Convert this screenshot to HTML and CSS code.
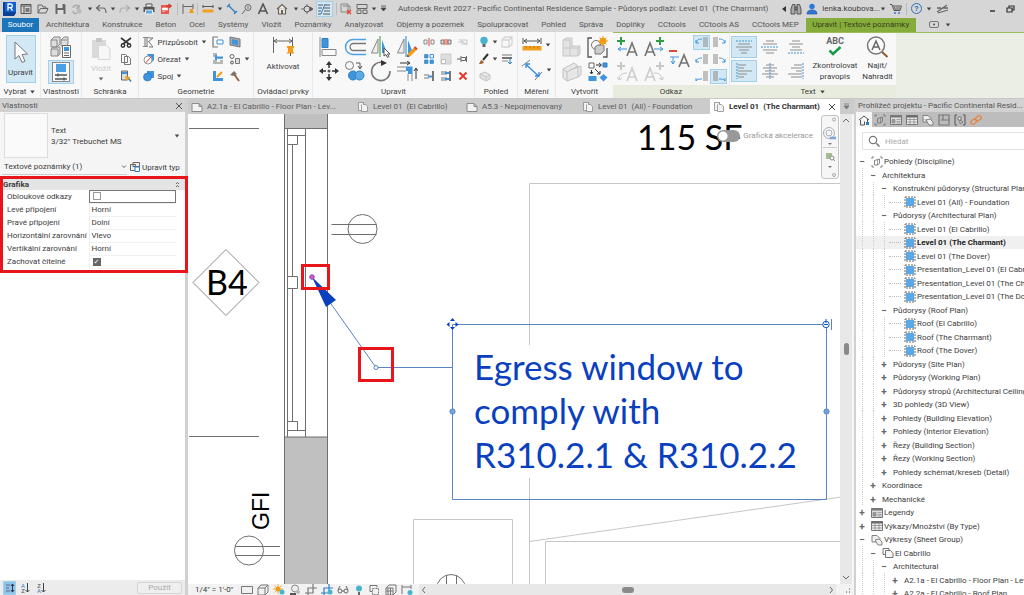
FILE: index.html
```
<!DOCTYPE html>
<html lang="cs">
<head>
<meta charset="utf-8">
<title>Autodesk Revit 2027</title>
<link rel="stylesheet" href="styles.css">
</head>
<body>
<svg class="sprite" aria-hidden="true">
  <symbol id="caret" viewBox="0 0 6 4"><path d="M.8.5h4.4L3 3.4z" fill="#444"/></symbol>
  <symbol id="sheet" viewBox="0 0 12 12"><path d="M1 2.500h7l3 3v5H1zM8 2.500v3h3" fill="#f2f2f2" stroke="#8c8c8c"/></symbol>
  <symbol id="plan" viewBox="0 0 12 12"><path d="M1.500 1.500h5v2h2l2 2v5h-6v-1h-3zM6.500 1.500v2M4.500 3.500v6" fill="#f2f2f2" stroke="#8c8c8c" stroke-width=".8"/></symbol>
  <symbol id="view" viewBox="0 0 12 12"><rect x="1" y="1" width="10" height="10" fill="none" stroke="#666" stroke-dasharray="2 1"/><path d="M2 2h8v8H2z" fill="#5aa9e6"/></symbol>
  <symbol id="disc" viewBox="0 0 12 12"><path d="M1 3V1h2M9 1h2v2M11 9v2H9M3 11H1V9M3.500 4.500l5-1.500v4.500L6.500 9h-3z" fill="none" stroke="#777" stroke-width=".9"/><path d="M6.500 4v5" stroke="#777" stroke-width=".7"/></symbol>
  <symbol id="table" viewBox="0 0 12 12"><path d="M.5 1.500h11v9H.5z" fill="#eee" stroke="#777"/><path d="M.5 2.500h11" stroke="#666" stroke-width="2"/><path d="M4 2v8M8 2v8M1 5.500h10M1 8h10" stroke="#888" stroke-width=".8"/></symbol>
  <symbol id="legend" viewBox="0 0 12 12"><path d="M.5 1.500h11v9H.5z" fill="#ddd" stroke="#777"/><path d="M.5 2.500h11" stroke="#777" stroke-width="2"/><path d="M2 5.500h3v3.500H2zM6.500 5.500h4M6.500 7.500h4M6.500 9h4" fill="#999" stroke="#888" stroke-width=".7"/></symbol>
  <symbol id="sheets" viewBox="0 0 12 12"><path d="M1 5V1.500h5l4 4M1 5v3h4M4 6l4-1 3 3v3H7z" fill="#eee" stroke="#777" stroke-width=".9"/></symbol>
  <symbol id="stack" viewBox="0 0 12 12"><path d="M1 1.500h6v2M1 1.500v6h2M3.500 3.500h5l2.500 3v4H3.500z" fill="#f6f6f6" stroke="#666" stroke-width=".9"/></symbol>
</svg>

<header class="titlebar">
  <div class="quick">
    <button aria-label="Revit"><svg width="16" height="14"><path d="M2 0h13v11l-2 3H2z" fill="#0a3f92"/><path d="M4 0h11v10H4z" fill="#1560d0"/><path d="M7 8.500V2h2.500a1.800 1.800 0 0 1 0 3.700H7M9.500 5.700l2 2.800" fill="none" stroke="#fff" stroke-width="1.300"/></svg></button>
    <button aria-label="Domů"><svg width="12" height="12"><path d="M1 1.500h10v9H1zM1 3h10M4 3v7" fill="none" stroke="#555"/><path d="M5.500 5h4v4h-4z" fill="#777"/></svg></button>
    <button aria-label="Otevřít"><svg width="12" height="12"><path d="M1 10V2h4l1 2h3v1.500M1 10l2.500-4.500H11L9 10z" fill="none" stroke="#666"/></svg></button>
    <button aria-label="Uložit"><svg width="11" height="12"><path d="M.5 1h9l1 1v9H.5z" fill="#666"/><path d="M2.500 1h5v4h-5zM2.500 7h6v4h-6z" fill="#ddd"/></svg></button>
    <button aria-label="Synchronizovat"><svg width="12" height="12"><path d="M2 5a3 3 0 0 1 5-2l1-1M8 2v3H5M2 8a2.500 2.500 0 0 0 4 2" fill="none" stroke="#aaa" stroke-width="1.500"/><circle cx="8" cy="8" r="2.500" fill="#bbb"/></svg></button>
    <svg class="dd"><use href="#caret"/></svg>
    <button aria-label="Zpět"><svg width="12" height="10"><path d="M5 1L1.500 4 5 7M2 4h6c2 0 3 1.500 3 5" fill="none" stroke="#666" stroke-width="1.200"/></svg></button>
    <svg class="dd"><use href="#caret"/></svg>
    <button aria-label="Znovu"><svg width="12" height="10"><path d="M7 1l3.500 3L7 7M10 4H4C2 4 1 5.500 1 9" fill="none" stroke="#b0b0b0" stroke-width="1.200"/></svg></button>
    <svg class="dd"><use href="#caret"/></svg>
    <button aria-label="Tisk"><svg width="12" height="12"><path d="M3 1h6v3H3z" fill="#eee" stroke="#555"/><path d="M.5 4h11v5H.5z" fill="#555"/><path d="M2.500 7h7v4h-7z" fill="#5aa9e6" stroke="#eee"/></svg></button>
    <button aria-label="Export"><svg width="12" height="12"><path d="M1 2h8v9H1z" fill="#e85a50"/><path d="M2.500 5h5v2h-5zM2.500 8.500h2" fill="#fff" stroke="#fff" stroke-width=".6"/><path d="M6 3h4M8.500 1l2.500 2-2.500 2" fill="none" stroke="#d43b30" stroke-width="1.500"/></svg></button>
    <i class="sep"></i>
    <button aria-label="Kóta"><svg width="12" height="12"><path d="M1 1v10M11 1v5M1 3.500h10" stroke="#666" fill="none"/><path d="M8 6h3v3h1v1h-5V9h1z" fill="#f39c12"/></svg></button>
    <i class="sep"></i>
    <button aria-label="Měřit"><svg width="12" height="10"><path d="M1 1v3M11 1v3M1 2.500h10" stroke="#555"/><path d="M.5 5.500h11v3H.5z" fill="#f0a01e"/></svg></button>
    <svg class="dd"><use href="#caret"/></svg>
    <button aria-label="Zarovnaná kóta"><svg width="12" height="12"><path d="M1 4l3-3M8 11l3-3M3 3l6 6" stroke="#2f7fc4" fill="none" stroke-width="1.400"/></svg></button>
    <button aria-label="Značka"><svg width="12" height="12"><path d="M1 11l3-4" stroke="#666"/><circle cx="7" cy="4.500" r="3" fill="none" stroke="#666"/><path d="M7 3v3" stroke="#666"/></svg></button>
    <button aria-label="Text"><svg width="12" height="12"><path d="M1.500 11L6 1l4.500 10M3 8h6" fill="none" stroke="#555" stroke-width="1.600"/></svg></button>
    <button aria-label="3D pohled"><svg width="12" height="12"><path d="M1 6l5-4.500L11 6M2.500 5v6h7V5" fill="#f3e7d3" stroke="#666" stroke-width="1.200"/><path d="M5 7h2v4H5z" fill="#666"/></svg></button>
    <svg class="dd"><use href="#caret"/></svg>
    <button aria-label="Řez"><svg width="12" height="12"><circle cx="6" cy="6" r="3" fill="none" stroke="#555"/><path d="M6 1v2M6 9v2M0 6h3M9 4l3 2-3 2z" stroke="#555" fill="#555" stroke-width=".8"/></svg></button>
    <button class="on" aria-label="Tenké čáry"><svg width="14" height="12"><path d="M1 2h5M8 2h5M1 5h4M7 5h6M1 8h3M7 8h6M1 11h3M6 11h7" stroke="#555"/><path d="M8 1L4 11" stroke="#2f7fc4"/></svg></button>
    <i class="sep"></i>
    <button aria-label="Zavřít pohledy"><svg width="12" height="12"><path d="M1 1h7v8H1zM3 3h7v4" fill="none" stroke="#888"/><path d="M7 7l4 4m0-4l-4 4" stroke="#e2453a" stroke-width="1.500"/></svg></button>
    <button aria-label="Přepnout okna"><svg width="12" height="12"><path d="M1 1.500h10v4H1zM1 7h4v3.500H1zM7 7h4v3.500H7z" fill="none" stroke="#666"/></svg></button>
    <svg class="dd"><use href="#caret"/></svg>
    <button aria-label="Přizpůsobit panel"><svg width="7" height="7"><path d="M1 1h5M1 3h5L3.500 6z" stroke="#444" fill="#444" stroke-width=".8"/></svg></button>
  </div>
  <div class="doc-title">Autodesk Revit 2027 - Pacific Continental Residence Sample - Půdorys podlaží: Level 01 &nbsp;(The Charmant)</div>
  <div class="account">
    <svg width="4" height="6"><path d="M4 0v6L0 3z" fill="#333"/></svg>
    <button aria-label="Hledat"><svg width="12" height="12"><path d="M1 6l1.500-4.500H5V11H1zM11 6L9.500 1.500H7V11h4zM5 4h2v3H5z" fill="#aaa" stroke="#555"/></svg></button>
    <button aria-label="Uživatel"><svg width="12" height="12"><circle cx="6" cy="3.500" r="2.700" fill="#2d78d6"/><path d="M1 11c0-3 2-4 5-4s5 1 5 4z" fill="#2d78d6" stroke="#1b4f96" stroke-width=".6"/></svg></button>
    <button class="user">lenka.koubova...<svg class="dd"><use href="#caret"/></svg></button>
    <button aria-label="Obchod"><svg width="12" height="12"><path d="M0 1.500h2l2 6h6l1.500-4.500H3M4.500 4l1 3M7 4v3M9 4v3" fill="none" stroke="#555"/><circle cx="5" cy="10" r="1" fill="#2d78d6"/><circle cx="9" cy="10" r="1" fill="#2d78d6"/></svg></button>
    <i class="sep"></i>
    <button class="help" aria-label="Nápověda">?</button>
    <svg class="dd"><use href="#caret"/></svg>
    <button aria-label="Autodesk"><svg width="13" height="10"><path d="M1 8l10-7M1 4h4M2 9l10-3M6 4h6" stroke="#666" stroke-width="1.300"/></svg></button>
  </div>
  <div class="winbtns">
    <button aria-label="Minimalizovat"><svg width="8" height="8"><path d="M1 6h5" stroke="#333" stroke-width="1.500"/></svg></button>
    <button aria-label="Obnovit"><svg width="9" height="8"><path d="M1 3h5v4H1zM3 3V1h5v4H6" fill="none" stroke="#333" stroke-width="1.200"/></svg></button>
  </div>
</header>

<nav class="menu">
  <button class="file">Soubor</button>
  <button>Architektura</button><button>Konstrukce</button><button>Beton</button><button>Ocel</button><button>Systémy</button><button>Vložit</button><button>Poznámky</button><button>Analyzovat</button><button>Objemy a pozemek</button><button>Spolupracovat</button><button>Pohled</button><button>Správa</button><button>Doplňky</button><button>CCtools</button><button>CCtools AS</button><button>CCtools MEP</button>
  <button class="ctx">Upravit | Textové poznámky</button>
  <button class="mode" aria-label="Zobrazení pásu"><svg width="10" height="7"><rect x=".5" y=".5" width="9" height="6" rx="1.500" fill="none" stroke="#777"/><circle cx="5" cy="3.500" r="1" fill="#555"/></svg><svg class="dd"><use href="#caret"/></svg></button>
</nav>

<section class="ribbon">
  <div class="panel p-select">
    <div class="tools"><button class="big on"><svg width="16" height="24"><path d="M2 2v17l4-3.500 3 7 3-1.300-3-6.700 5.500-.5z" fill="#fff" stroke="#777"/></svg><span>Upravit</span></button></div>
    <h2>Vybrat <svg class="dd"><use href="#caret"/></svg></h2>
  </div>
  <div class="panel p-props">
    <div class="tools two">
      <button aria-label="Vlastnosti typu"><svg width="24" height="24"><path d="M2 5l3-3h6v7l-3 3H2zM12 5l3-3h4v7l-2 2h-5zM2 14l2-2h7v7l-2 2H2zM2 5h6v7M12 5h6M2 14h7v7" fill="#ddd" stroke="#888"/><path d="M13.500 10.500h8v12h-8z" fill="#fff" stroke="#666"/><path d="M15 12h5v4h-5z" fill="#3f95dd"/><path d="M15 18h5M15 20.500h5" stroke="#666"/></svg></button>
      <button class="on" aria-label="Vlastnosti"><svg width="18" height="20"><rect x=".5" y=".5" width="17" height="19" fill="#f8f8f8" stroke="#888"/><path d="M4 2h10v8H4z" fill="#4b9fe2"/><path d="M3 13h12M3 17h12M6 11.500v3M12 15.500v3" stroke="#555" stroke-width="1.300"/></svg></button>
    </div>
    <h2>Vlastnosti</h2>
  </div>
  <div class="panel p-clip">
    <div class="tools">
      <button class="big off"><svg width="20" height="23"><path d="M1 3h14v18H1z" fill="#d2d2d2"/><path d="M5 1h6v4H5z" fill="#bbb"/><path d="M7.500 8.500h8l3.500 3.500v10.500H7.500z" fill="#f7f7f7" stroke="#cfcfcf"/></svg><span>Vložit</span><svg class="dd"><use href="#caret"/></svg></button>
      <div class="col3">
        <button aria-label="Vyjmout"><svg width="12" height="11"><path d="M1 1l8 6M11 1L3 7" stroke="#333" stroke-width="1.600"/><circle cx="3" cy="8.500" r="1.700" fill="none" stroke="#333" stroke-width="1.400"/><circle cx="9" cy="8.500" r="1.700" fill="none" stroke="#333" stroke-width="1.400"/></svg></button>
        <button aria-label="Kopírovat"><svg width="12" height="12"><path d="M1.500 1.500h4l2 2v6h-6zM4.500 3.500h4l2 2v6h-6z" fill="#fafafa" stroke="#777"/></svg></button>
        <button aria-label="Přiřadit typ"><svg width="12" height="12"><path d="M1.500 1h6v9h-6z" fill="#ddd" stroke="#666"/><path d="M2 2h5v2H2z" fill="#3f95dd"/><path d="M5 6l5 1v3H6z" fill="#f0a01e"/><path d="M9 9l2 2.500" stroke="#2f7fc4" stroke-width="1.500"/></svg></button>
      </div>
    </div>
    <h2>Schránka</h2>
  </div>
  <div class="panel p-geom">
    <div class="tools">
      <div class="col3 labelled">
        <button><svg width="12" height="12"><path d="M2 1v10M4 1v10M5 6l5-4H6M6 6l4 5H6" fill="none" stroke="#777"/><path d="M0 1.500h6M0 10.500h5" stroke="#888"/></svg>Přizpůsobit <svg class="dd"><use href="#caret"/></svg></button>
        <button><svg width="12" height="12"><path d="M4 1h7v6l-3 3z" fill="#3f95dd"/><circle cx="5" cy="7" r="4" fill="#fafafa" stroke="#999"/><path d="M2.500 10L8 4" stroke="#e2453a"/></svg>Ořezat <svg class="dd"><use href="#caret"/></svg></button>
        <button><svg width="12" height="12"><path d="M4 1h7v7H4z" fill="#3f95dd"/><circle cx="4.500" cy="7" r="4" fill="#3f95dd" stroke="#2570b5" stroke-width=".6"/></svg>Spoj <svg class="dd"><use href="#caret"/></svg></button>
      </div>
      <div class="grid23">
        <button aria-label="Sražení"><svg width="12" height="12"><path d="M6 1H1v10h5" fill="none" stroke="#777" stroke-width="1.200"/><path d="M5 4h6v4H5z" fill="#fff" stroke="#3f95dd"/></svg></button>
        <button aria-label="Plocha"><svg width="12" height="12"><path d="M1 1l10 2v8L1 9z" fill="#aaa" stroke="#777"/><path d="M3 3l6 1.500v5L3 8z" fill="#3f95dd"/></svg></button>
        <button aria-label="Nosník"><svg width="12" height="12"><path d="M1 1h4M1 3h3M1 8h4M1 10h10M6 5h5M8 8h3" stroke="#777"/><path d="M4 2v5M4 4.500h7" stroke="#3f95dd" stroke-width="2"/></svg></button>
        <button aria-label="Rozdělit"><svg width="12" height="12"><circle cx="3" cy="3.500" r="2" fill="none" stroke="#666"/><circle cx="3" cy="9.500" r="1.500" fill="#ccc" stroke="#666"/><path d="M6.500 5.500h4v5h-4z" fill="#ddd" stroke="#777"/></svg></button>
        <button aria-label="Malovat"><svg width="12" height="12"><path d="M1 1v10h10V8H4V1z" fill="#3f95dd"/><path d="M5 7l5-5" stroke="#f39c12" stroke-width="2"/></svg></button>
        <button aria-label="Demolice"><svg width="12" height="12"><path d="M1 5l4-4 3 3-4 2z" fill="#777"/><path d="M5 4l5 7" stroke="#9a6344" stroke-width="2"/></svg></button>
      </div>
      <svg class="dd"><use href="#caret"/></svg>
    </div>
    <h2>Geometrie</h2>
  </div>
  <div class="panel p-ctrl">
    <div class="tools"><button class="big"><svg width="22" height="20"><path d="M1.500 1v16M20.500 1v10M1.500 5h19M5 3L2 5l3 2M17 3l3 2-3 2" fill="none" stroke="#666"/><path d="M15 10h7v1.500l-1 1v3l1.500 2h-8l1.500-2v-3l-1-1z" fill="#f39c12"/><path d="M18.500 17v3" stroke="#555"/></svg><span>Aktivovat</span></button></div>
    <h2>Ovládací prvky</h2>
  </div>
  <div class="panel p-modify">
    <div class="tools">
      <div class="grid42">
        <button aria-label="Zarovnat"><svg width="20" height="20"><path d="M1 0v20" stroke="#888"/><path d="M3 1.500h6v9H3z" fill="#3f95dd" stroke="#2f7fc4"/><path d="M3 12.500h14v6H3z" fill="#fafafa" stroke="#888"/></svg></button>
        <button aria-label="Odsadit"><svg width="22" height="18"><path d="M22 1.500H9a7.500 7.500 0 0 0 0 15h13" fill="none" stroke="#4ba3e3" stroke-width="1.500"/><path d="M22 5.500H9.500a3.500 3.500 0 0 0 0 7H22" fill="none" stroke="#777" stroke-width="1.300"/></svg></button>
        <button aria-label="Zrcadlit podle osy"><svg width="22" height="22"><path d="M8 3L1.500 17H8z" fill="#eee" stroke="#888"/><path d="M12 4l5 13h-5z" fill="#3f95dd"/><path d="M10 0v21" stroke="#54b35c" stroke-width="1.300"/><path d="M14 12v8l2-1.500 1.500 3 1.500-1-1.500-2.500h2.500z" fill="#fff" stroke="#555"/></svg></button>
        <button aria-label="Zrcadlit kreslením osy"><svg width="22" height="22"><path d="M8 3L1.500 17H8z" fill="#eee" stroke="#888"/><path d="M12 4l5 13h-5z" fill="#3f95dd"/><path d="M10 0v21" stroke="#4ba3e3" stroke-width="1.300"/><path d="M12.500 19.500l7-7" stroke="#f39c12" stroke-width="3.500"/><path d="M19 13l1.500-1.500" stroke="#e2453a" stroke-width="3.500"/><path d="M11 21l.5-2.500 2 2z" fill="#333"/></svg></button>
        <button aria-label="Přesunout"><svg width="20" height="20"><path d="M10 2v5M10 13v5M2 10h5M13 10h5" stroke="#333" stroke-width="1.500"/><path d="M10 0l3 4H7zM10 20l3-4H7zM0 10l4-3v6zM20 10l-4-3v6z" fill="#333"/><circle cx="10" cy="10" r="1.500" fill="#555"/></svg></button>
        <button aria-label="Kopírovat"><svg width="22" height="20"><circle cx="5.500" cy="4.500" r="4" fill="none" stroke="#777"/><path d="M12 2h4v5M14 5l2 3 2-3" fill="none" stroke="#555"/><circle cx="9" cy="14.500" r="4.500" fill="#3f95dd" stroke="#2f7fc4"/><circle cx="15.500" cy="14.500" r="4.500" fill="#5aa9e6" stroke="#2f7fc4"/></svg></button>
        <button aria-label="Otočit"><svg width="22" height="22"><path d="M13 2.500a9.200 9.200 0 1 0 7 8.500" fill="none" stroke="#777" stroke-width="1.600"/><path d="M11 0l6 3-6 3z" fill="#333"/></svg></button>
        <button aria-label="Oříznout"><svg width="22" height="20"><path d="M1 6h9M1 10h9M12 13v7M16 13v7" stroke="#888" fill="none"/><path d="M10 5.500h6.500V13H12v-3h-2z" fill="#3f95dd"/><path d="M4 2h9M11 0l3 2-3 2M20 18V8M18 10l2-3 2 3" fill="none" stroke="#333"/></svg></button>
      </div>
      <div class="grid33">
        <button aria-label="Rozdělit prvek"><svg width="12" height="8"><path d="M1 2h3v4H1zM8 2h3v4H8z" fill="none" stroke="#888"/><path d="M6 0v8" stroke="#e2453a"/></svg></button>
        <button aria-label="Rozdělit s mezerou"><svg width="12" height="8"><path d="M1 2h3v4H1zM8 2h3v4H8z" fill="#ddd" stroke="#777"/><path d="M5 1v6M7 1v6" stroke="#e2453a"/></svg></button>
        <button class="off" aria-label="Uvolnit"><svg width="12" height="10"><path d="M1 5h4M5 2v6M6 3h4v4H6M2 2l8 6" fill="none" stroke="#bbb"/></svg></button>
        <button aria-label="Pole"><svg width="12" height="12"><path d="M1.500 1.500h3.500v3.500H1.500zM1.500 7h3.500v3.500H1.500zM7 7h3.500v3.500H7z" fill="#3f95dd" stroke="#2f7fc4" stroke-width=".6"/><path d="M7 1.500h3.500v3.500H7z" fill="#fff" stroke="#3f95dd"/></svg></button>
        <button aria-label="Měřítko"><svg width="12" height="12"><path d="M1 1h10v10H1z" fill="#ddd" stroke="#ccc"/><path d="M1.500 6.500h4v4h-4z" fill="#fff" stroke="#bbb"/></svg></button>
        <button aria-label="Připnout"><svg width="12" height="10"><path d="M0 5h4M4 2v6M4.500 3.500h4v3h-4M9.500 2v6" fill="none" stroke="#666"/></svg></button>
        <button aria-label="Prodloužit jeden"><svg width="12" height="12"><path d="M10 1v10" stroke="#777" stroke-width="2"/><path d="M1 5h5M1 8h5" stroke="#777"/><path d="M5 6.500h4" stroke="#3f95dd" stroke-width="2"/></svg></button>
        <button aria-label="Prodloužit více"><svg width="12" height="12"><path d="M10 1v10" stroke="#777" stroke-width="2"/><path d="M1 2h6M1 4h6M1 8h6M1 10h6" stroke="#777"/><path d="M5 3h4M5 9h4" stroke="#3f95dd" stroke-width="2"/></svg></button>
        <button aria-label="Odstranit"><svg width="10" height="10"><path d="M1.500 1.500l7 7m0-7l-7 7" stroke="#e8392b" stroke-width="2"/></svg></button>
      </div>
    </div>
    <h2>Upravit</h2>
  </div>
  <div class="panel p-view">
    <div class="tools">
      <div class="col3">
        <button aria-label="Skrýt"><svg width="10" height="12"><circle cx="5" cy="4.500" r="3.700" fill="#45b4cc"/><path d="M3.500 8h3v3h-3z" fill="#666"/></svg><svg class="dd"><use href="#caret"/></svg></button>
        <button aria-label="Přepsat grafiku"><svg width="10" height="12"><path d="M4 7l5-6" stroke="#333" stroke-width="2"/><path d="M0 11l2-4 3 2c-1 2-3 2-5 2z" fill="#a5632a"/></svg><svg class="dd"><use href="#caret"/></svg></button>
        <button class="off" aria-label="Kvádr výběru"><svg width="12" height="11"><path d="M1 3l5-2 5 3v4L7 10 1 7zM1 3l6 2.500L11 4M7 5.500V10" fill="#ddd" stroke="#bbb"/></svg></button>
      </div>
      <div class="col2">
        <button class="off" aria-label="Kvádr"><svg width="12" height="12"><path d="M1 4h7v7H1zM1 4l3-3h7v7l-3 3M8 4l3-3" fill="none" stroke="#ccc" stroke-width="1.300"/></svg></button>
        <button aria-label="Tloušťka čar"><svg width="12" height="12"><path d="M1 2h10" stroke="#777"/><path d="M1 5h10" stroke="#666" stroke-width="1.800"/><path d="M1 8h6" stroke="#888"/><path d="M9 5v6M7 9l2 2 2-2" stroke="#2f7fc4" fill="none"/></svg></button>
      </div>
    </div>
    <h2>Pohled</h2>
  </div>
  <div class="panel p-measure">
    <div class="tools two">
      <button aria-label="Měřit"><svg width="20" height="14"><path d="M1 0v6M19 0v6M2 3h16M5 1L2 3l3 2M15 1l3 2-3 2" fill="none" stroke="#555"/><path d="M.5 8h19v4.500H.5z" fill="#f0a01e"/><path d="M4 8v2M8 8v2M12 8v2M16 8v2" stroke="#a86600" stroke-width=".7"/></svg><svg class="dd"><use href="#caret"/></svg></button>
      <button aria-label="Zarovnaná kóta"><svg width="22" height="22"><path d="M1 7l8-6M14 21l7-8" stroke="#777"/><path d="M4.500 5l13 12M5 9V5h4M18 13v4h-4" fill="none" stroke="#2f8be0" stroke-width="1.300"/></svg><svg class="dd"><use href="#caret"/></svg></button>
    </div>
    <h2>Měření</h2>
  </div>
  <div class="panel p-create">
    <div class="tools"><div class="grid22">
      <button class="off" aria-label="Sestava"><svg width="20" height="20"><path d="M1 3l3-2h6v8h8v8l-2 2H1zM10 9l-2 2v8M1 11h15v8M16 11l2-2M1 3h7v8" fill="#dedede" stroke="#bbb"/></svg></button>
      <button aria-label="Skupina"><svg width="21" height="22"><path d="M5 2H1v19h4M16 21h4V12" fill="none" stroke="#555" stroke-width="1.300"/><circle cx="9" cy="9" r="4.500" fill="#fafafa" stroke="#777"/><path d="M8 11l3-2h6v6l-3 3H8z" fill="#ccc" stroke="#777"/><circle cx="16" cy="5" r="3.300" fill="#f39c12"/><path d="M16 0v10M11 5h10M12.500 1.500l7 7m0-7l-7 7" stroke="#f39c12"/></svg></button>
      <button class="off" aria-label="Díly"><svg width="20" height="20"><path d="M1 7l11-6 4 3v11L5 19l-4-3zM1 7l4 3v9M5 10l11-6M8 8l11-4v9l-3 2" fill="#e3e3e3" stroke="#b5b5b5"/></svg></button>
      <button aria-label="Podobný prvek"><svg width="20" height="20"><path d="M1 1h5v5H1z" fill="#fff" stroke="#666"/><path d="M15 1h4v4h-4z" fill="#3f95dd" stroke="#2f7fc4"/><path d="M.5 14h8v5h-8z" fill="#3f95dd"/><path d="M15.500 12l4 3.500-4 4-4-4z" fill="#3f95dd"/><path d="M8 3h5M11 1l2.500 2L11 5M7 7l5 5M12 9v3H9M3.500 8v4M2 10l1.500 2L5 10" fill="none" stroke="#333"/></svg></button>
    </div></div>
    <h2>Vytvořit</h2>
  </div>
  <div class="panel p-leader ctx-panel">
    <div class="tools">
      <div class="grid22 wide">
        <button aria-label="Přidat levý odkaz"><svg width="22" height="20"><path d="M10 19l5-13 5 13M12 15h6" fill="none" stroke="#777" stroke-width="1.700"/><path d="M4 0v8M0 4h8" stroke="#2e9e46" stroke-width="2"/><path d="M1 12h9M4 10l-3 2 3 2" fill="none" stroke="#3f95dd"/></svg></button>
        <button aria-label="Přidat pravý odkaz"><svg width="22" height="20"><path d="M2 19L7 6l5 13M4 15h6" fill="none" stroke="#777" stroke-width="1.700"/><path d="M17 0v8M13 4h8" stroke="#2e9e46" stroke-width="2"/><path d="M11 12h9M17 10l3 2-3 2" fill="none" stroke="#3f95dd"/></svg></button>
        <button class="off" aria-label="Přidat levý oblouk"><svg width="22" height="20"><path d="M10 19l5-13 5 13M12 15h6" fill="none" stroke="#c4c4c4" stroke-width="1.700"/><path d="M4 0v8M0 4h8" stroke="#bbb" stroke-width="2"/><path d="M10 11c-5 0-8 2-8 7M0 15l2 3 3-2" fill="none" stroke="#bbb"/></svg></button>
        <button class="off" aria-label="Přidat pravý oblouk"><svg width="22" height="20"><path d="M2 19L7 6l5 13M4 15h6" fill="none" stroke="#c4c4c4" stroke-width="1.700"/><path d="M17 0v8M13 4h8" stroke="#bbb" stroke-width="2"/><path d="M11 11c5 0 8 2 8 7M16 16l3 2 2-3" fill="none" stroke="#bbb"/></svg></button>
      </div>
      <button aria-label="Odebrat odkaz"><svg width="22" height="20"><path d="M10 18l5-12 5 12M12 14h6" fill="none" stroke="#777" stroke-width="1.700"/><path d="M0 2h8" stroke="#e2453a" stroke-width="2"/><path d="M10 8H1M4 8v7M2 12l2 3 2-3" fill="none" stroke="#3f95dd"/></svg></button>
      <div class="grid23 attach">
        <button class="on" aria-label="Levý nahoře"><svg width="14" height="10"><path d="M1 6c1-3 2-4 6-4M1 3v3h3" fill="none" stroke="#3f95dd"/><path d="M8 1h5M8 3h5M8 5h5M8 7h5M8 9h5" stroke="#888"/></svg></button>
        <button aria-label="Pravý nahoře"><svg width="14" height="10"><path d="M13 6c-1-3-2-4-6-4M13 3v3h-3" fill="none" stroke="#3f95dd"/><path d="M1 1h5M1 3h5M1 5h5M1 7h5M1 9h5" stroke="#888"/></svg></button>
        <button aria-label="Levý uprostřed"><svg width="14" height="10"><path d="M1 8c1-3 2-4 6-4M1 5v3h3" fill="none" stroke="#3f95dd"/><path d="M8 1h5M8 3h5M8 5h5M8 7h5M8 9h5" stroke="#888"/></svg></button>
        <button aria-label="Pravý uprostřed"><svg width="14" height="10"><path d="M13 8c-1-3-2-4-6-4M13 5v3h-3" fill="none" stroke="#3f95dd"/><path d="M1 1h5M1 3h5M1 5h5M1 7h5M1 9h5" stroke="#888"/></svg></button>
        <button aria-label="Levý dole"><svg width="14" height="10"><path d="M1 10c1-2 3-2 6-2M1 7v3" fill="none" stroke="#3f95dd"/><path d="M8 1h5M8 3h5M8 5h5M8 7h5M8 9h5" stroke="#888"/></svg></button>
        <button class="on" aria-label="Pravý dole"><svg width="14" height="10"><path d="M13 10c-1-2-3-2-6-2M13 7v3" fill="none" stroke="#3f95dd"/><path d="M1 1h5M1 3h5M1 5h5M1 7h5M1 9h5" stroke="#888"/></svg></button>
      </div>
    </div>
    <h2>Odkaz</h2>
  </div>
  <div class="panel p-text ctx-panel">
    <div class="tools">
      <div class="grid32">
        <button class="on" aria-label="Zarovnat nahoru"><svg width="18" height="16"><path d="M1 2h16" stroke="#3f95dd" stroke-dasharray="2 1"/><path d="M3 5h12M1 8h16M4 11h10M6 14h6" stroke="#8d8d8d"/></svg></button>
        <button aria-label="Zarovnat na střed svisle"><svg width="18" height="16"><path d="M5 2h8M2 5h14M2 11h14M5 14h8" stroke="#8d8d8d"/><path d="M0 8h18" stroke="#3f95dd" stroke-dasharray="2 1"/></svg></button>
        <button aria-label="Zarovnat dolů"><svg width="18" height="16"><path d="M5 2h8M2 5h14M5 8h8M3 11h12" stroke="#8d8d8d"/><path d="M1 14h16" stroke="#3f95dd" stroke-dasharray="2 1"/></svg></button>
        <button class="on" aria-label="Zarovnat vlevo"><svg width="18" height="16"><path d="M2 0v16" stroke="#3f95dd" stroke-dasharray="2 1"/><path d="M3 2h8M3 5h6M3 8h14M3 11h9M3 14h6" stroke="#8d8d8d"/></svg></button>
        <button aria-label="Zarovnat na střed"><svg width="18" height="16"><path d="M5 2h8M2 5h14M4 8h10M1 11h16M5 14h8" stroke="#8d8d8d"/><path d="M9 0v16" stroke="#3f95dd" stroke-dasharray="2 1"/></svg></button>
        <button aria-label="Zarovnat vpravo"><svg width="18" height="16"><path d="M16 0v16" stroke="#3f95dd" stroke-dasharray="2 1"/><path d="M7 2h8M4 5h11M9 8h6M1 11h14M4 14h11" stroke="#8d8d8d"/></svg></button>
      </div>
      <button class="big spell"><b>ABC</b><svg width="14" height="10"><path d="M1.500 4.500L5 8l7.500-7" fill="none" stroke="#1e9a4c" stroke-width="2.600"/></svg><span>Zkontrolovat<br>pravopis</span></button>
      <button class="big find"><svg width="23" height="22"><circle cx="10" cy="9.500" r="8.500" fill="#fafafa" stroke="#777" stroke-width="1.500"/><path d="M6 14l4-9 4 9M7.500 11h5" fill="none" stroke="#666" stroke-width="1.500"/><path d="M16 16l5.500 5" stroke="#8b5a33" stroke-width="2"/></svg><span>Najít/<br>Nahradit</span></button>
    </div>
    <h2>Text <svg class="dd"><use href="#caret"/></svg></h2>
  </div>
</section>

<main class="work">
  <aside class="props">
    <header class="cap">Vlastnosti<button aria-label="Zavřít"><svg width="8" height="8"><path d="M1 1l6 6m0-6L1 7" stroke="#555"/></svg></button></header>
    <button class="type"><i class="swatch"></i><span>Text<br>3/32" Trebuchet MS</span><svg class="dd"><use href="#caret"/></svg></button>
    <div class="filter">
      <span class="pick"><select aria-label="Výběr"><option>Textové poznámky (1)</option></select><svg width="6" height="4"><path d="M1 .5l2 2 2-2" fill="none" stroke="#666"/></svg></span>
      <button><svg width="10" height="10"><path d="M.5 2.500h5v6h-5zM3 .5h6.500v4H3z" fill="#eee" stroke="#666"/><path d="M5 5h4.500v4.500H5z" fill="#fff" stroke="#2f7fc4"/></svg>Upravit typ</button>
    </div>
    <section class="marked">
      <h3>Grafika <svg width="5" height="8"><path d="M1 3l1.500-1.500L4 3M1 6l1.500-1.500L4 6" fill="none" stroke="#444" stroke-width=".8"/></svg></h3>
      <table>
        <tr><th><label for="arc">Obloukové odkazy</label></th><td class="cell-edit"><input id="arc" type="checkbox"></td></tr>
        <tr><th>Levé připojení</th><td>Horní</td></tr>
        <tr><th>Pravé připojení</th><td>Dolní</td></tr>
        <tr><th>Horizontální zarovnání</th><td>Vlevo</td></tr>
        <tr><th>Vertikální zarovnání</th><td>Horní</td></tr>
        <tr><th><label for="keep">Zachovat čitelné</label></th><td><input id="keep" type="checkbox" checked></td></tr>
      </table>
    </section>
    <footer>
      <button class="on" aria-label="Skupiny"><svg width="10" height="10"><path d="M1 2h4M1 5h3M1 8h4" stroke="#668"/><path d="M7.500 1v8M6 3l1.500-2L9 3M6 7l1.500 2L9 7" fill="none" stroke="#334"/></svg></button>
      <button aria-label="Vzestupně"><span><em>A</em><br>Z</span><svg width="5" height="10"><path d="M2.500 0v9M.5 7l2 2 2-2" fill="none" stroke="#444"/></svg></button>
      <button aria-label="Sestupně"><span>Z<br><em>A</em></span><svg width="5" height="10"><path d="M2.500 0v9M.5 7l2 2 2-2" fill="none" stroke="#444"/></svg></button>
      <button class="apply" disabled>Použít</button>
    </footer>
  </aside>

  <section class="center">
    <nav class="tabs">
      <button><svg class="ic"><use href="#sheet"/></svg>A2.1a - El Cabrillo - Floor Plan - Lev...</button>
      <button><svg class="ic"><use href="#plan"/></svg>Level 01 &nbsp;(El Cabrillo)</button>
      <button><svg class="ic"><use href="#sheet"/></svg>A5.3 - Nepojmenovaný</button>
      <button><svg class="ic"><use href="#plan"/></svg>Level 01 &nbsp;(All) - Foundation</button>
      <button class="active"><svg class="ic"><use href="#plan"/></svg>Level 01 &nbsp;(The Charmant)<svg class="x" width="8" height="8"><path d="M1 1l6 6m0-6L1 7" stroke="#444"/></svg></button>
      <button class="more" aria-label="Další"><svg width="7" height="7"><path d="M1 1h5M1 3h5L3.500 6z" stroke="#777" fill="#777" stroke-width=".8"/></svg></button>
    </nav>
    <div class="canvas">
      <svg class="drawing" role="img" aria-label="Půdorys">
        <g transform="translate(-188 -114)" fill="none">
          <g class="ink">
            <path class="hatch" d="M284.500 100h43v28.500h-43zM284.500 437h43v160h-43z"/>
            <path d="M189 128.500h70M189 436.500h70"/>
            <path d="M284.500 114v323M287.500 128v309M292.500 144v132M292.500 288v133M305.500 128v309M327.500 128v309"/>
            <path d="M287.500 135.500h18M287.500 135.500h10v9h-10zM287.500 276.500h10v12h-10zM287.500 421.500h10v9h-10zM287.500 430.500h18"/>
            <path d="M226 249.500l33 33-33 33-33-33z" class="thin"/>
            <circle cx="362.500" cy="229" r="14.500"/><path d="M331.500 224.500h45M331.500 234.500h45"/>
            <circle cx="249" cy="550.500" r="14.500"/><path d="M235 546.500h45M235 555.500h45"/>
            <circle cx="451" cy="589" r="14.500"/><path d="M446.500 575v20M456.500 575v20"/>
          </g>
          <path class="faint" d="M2000 183.500H529.500V345M529.500 478v120M529.500 541.500L841 497M2000 541.500H545.500V600M413.500 600v-80.500h99V600"/>
          <text class="tag" x="206" y="295">B4</text>
          <text class="tag" x="637" y="150">115 SF</text>
          <text class="gfi" transform="translate(269 530) rotate(-90)">GFI</text>
          <g class="note">
            <path d="M452.500 324.500h374v175h-374zM452.500 367.500H376L312 277"/>
            <path d="M312 277l24 23-10 7z" class="solid"/>
            <circle cx="376" cy="367.500" r="2" fill="#fff"/>
            <circle cx="452.500" cy="411.500" r="2.600" class="grip"/><circle cx="826.500" cy="411.500" r="2.600" class="grip"/>
            <circle cx="312" cy="277" r="2.300" fill="#d558c8" stroke="#8a4bc0"/>
            <path class="solid" d="M452.500 318l2.500 3h-5zM452.500 330l2.500-3h-5zM446.500 324.500l3-2.500v5zM458.500 324.500l-3-2.500v5z"/>
            <circle cx="826" cy="324.500" r="3.200" fill="#fff" class="rot"/><path class="rot" d="M824 324.500h4M826 319v4"/><path d="M831.500 319v11"/>
            <text x="474" y="380">Egress window to</text>
            <text x="474" y="424">comply with</text>
            <text x="474" y="468">R310.2.1 &amp; R310.2.2</text>
          </g>
          <path d="M302.500 265.500h26v23h-26zM359.500 348.500h33v32h-33z" stroke="#e8151b" stroke-width="3"/>
        </g>
      </svg>
      <label class="accel"><input type="checkbox" role="switch">Grafická akcelerace</label>
      <div class="navbar">
        <svg width="16" height="62"><circle cx="12" cy="3.500" r="1.500" fill="none" stroke="#aaa"/><circle cx="7" cy="17" r="5.500" fill="none" stroke="#a9afb8"/><circle cx="7" cy="17" r="3" fill="none" stroke="#a9afb8"/><path d="M8 22h6" stroke="#7da7d9" stroke-width="2.500"/><path d="M6 27h4l-2 2zM6 50h4l-2 2z" fill="#777"/><path d="M1 31.500h14" stroke="#ccc"/><path d="M4 37h6v6H4z" fill="#a6bf92"/><circle cx="10" cy="42" r="2" fill="#fff" stroke="#888"/><path d="M11 43l2 2" stroke="#888"/><circle cx="12" cy="59" r="1.500" fill="none" stroke="#aaa"/></svg>
      </div>
    </div>
    <div class="vscroll"><svg width="8" height="6"><path d="M1 5l3-3 3 3" fill="none" stroke="#666"/></svg><i class="thumb"></i><svg width="8" height="6"><path d="M1 1l3 3 3-3" fill="none" stroke="#666"/></svg></div>
    <div class="viewbar">
      <span class="scale">1/4" = 1'-0"</span>
      <button aria-label="Detail"><svg width="12" height="10"><path d="M.5 1.500h11v7H.5z" fill="none" stroke="#777"/></svg></button>
      <button aria-label="Vizuální styl"><svg width="12" height="12"><path d="M1 4h7v7H1zM1 4l3-3h7v7l-3 3M8 4l3-3" fill="none" stroke="#777"/></svg></button>
      <button aria-label="Slunce"><svg width="12" height="12"><circle cx="5" cy="5" r="2.500" fill="#f39c12"/><path d="M5 0v10M0 5h10M1.500 1.500l7 7m0-7l-7 7" stroke="#f39c12" stroke-width=".8"/><circle cx="9" cy="8" r="2.500" fill="#45b4cc"/></svg></button>
      <button aria-label="Stíny"><svg width="12" height="12"><circle cx="6" cy="4.500" r="3.500" fill="#eee" stroke="#888"/><path d="M1 10h6" stroke="#555" stroke-width="2"/><circle cx="9" cy="8" r="2" fill="#bbb"/></svg></button>
      <button aria-label="Oříznout"><svg width="12" height="12"><path d="M0 9h8V0M3 12V4h9" fill="none" stroke="#777" stroke-width="1.200"/></svg></button>
      <button aria-label="Oblast ořezu"><svg width="12" height="12"><path d="M0 9h8V0M3 12V4h9" fill="none" stroke="#2f7fc4" stroke-width="1.200"/><circle cx="9" cy="8" r="2.500" fill="#45b4cc"/></svg></button>
      <button aria-label="Dočasně skrýt"><svg width="12" height="12"><circle cx="3" cy="7" r="2" fill="none" stroke="#666"/><circle cx="9" cy="7" r="2" fill="none" stroke="#666"/><path d="M1 6l2-4M11 6L9 2M5 7h2" stroke="#666"/></svg></button>
      <button aria-label="Odkrýt skryté"><svg width="12" height="12"><circle cx="6" cy="4.500" r="3" fill="#45b4cc"/><path d="M5 8h2v3H5z" fill="#666"/></svg></button>
      <button aria-label="Vlastnosti pohledu"><svg width="12" height="12"><path d="M1 1.500h7v2M1 1.500v6h2" fill="none" stroke="#777"/><path d="M3.500 4.500h6v6h-6z" fill="none" stroke="#777" stroke-dasharray="2 1"/></svg></button>
      <button aria-label="Analytický model"><svg width="12" height="12"><path d="M1 4l3-3h7v7l-3 3H1zM1 4h7v7M3 4v7M5.500 4v7M1 7h7" fill="none" stroke="#777"/></svg></button>
      <button aria-label="Vazby"><svg width="12" height="12"><path d="M1 1v9M1 3h9M10 1v4" fill="none" stroke="#777"/><circle cx="9" cy="8.500" r="2.500" fill="#45b4cc"/></svg></button>
      <div class="hscroll"><svg width="6" height="8"><path d="M4 1L1.500 4 4 7" fill="none" stroke="#666"/></svg><i class="thumb"></i><svg width="6" height="8"><path d="M2 1l2.500 3L2 7" fill="none" stroke="#666"/></svg></div>
      <svg width="14" height="8"><path d="M9 6h1M6 6h1M9 3h1" stroke="#888" stroke-width="1.300"/></svg>
    </div>
  </section>

  <aside class="browser">
    <header class="cap">Prohlížeč projektu - Pacific Continental Resid...</header>
    <div class="strip">
      <button class="active" aria-label="Vše"><svg width="12" height="12"><path d="M1 6l5-4 5 4M2.500 6v5h4V7.500M9.500 5v3" fill="none" stroke="#555"/><path d="M8 8h3v3H8z" fill="#2f7fc4"/></svg></button>
      <button aria-label="Pohledy"><svg class="ic"><use href="#disc"/></svg></button>
      <button aria-label="Legendy"><svg class="ic"><use href="#legend"/></svg></button>
      <button aria-label="Výkazy"><svg class="ic"><use href="#table"/></svg></button>
      <button aria-label="Výkresy"><svg class="ic"><use href="#sheets"/></svg></button>
      <button aria-label="Rodiny"><svg width="12" height="12"><path d="M1 1h10v10H1zM5 1v5h6M5 6H3" fill="none" stroke="#777" stroke-width="1.200"/></svg></button>
      <button aria-label="Skupiny"><svg width="12" height="12"><path d="M3 1H1v10h2M9 1h2v10H9" fill="none" stroke="#555"/><path d="M4 3h3v3H4zM6 6l3 2-3 2z" fill="#eee" stroke="#777"/></svg></button>
      <button aria-label="Odkazy"><svg width="12" height="12"><g transform="rotate(-35 6 6)" fill="none" stroke="#e8833a" stroke-width="1.200"><rect x="0" y="4" width="6" height="4" rx="2"/><rect x="6" y="4" width="6" height="4" rx="2"/></g></svg></button>
    </div>
    <label class="search"><svg width="12" height="12"><circle cx="5" cy="5" r="3.700" fill="none" stroke="#777" stroke-width="1.200"/><path d="M8 8l3.500 3.500" stroke="#777" stroke-width="1.500"/></svg><input type="search" placeholder="Hledat" aria-label="Hledat"></label>
    <ul class="tree">
      <li><b>−</b><svg class="ic"><use href="#disc"/></svg>Pohledy (Discipline)</li>
      <li class="l1"><b>−</b>Architektura</li>
      <li class="l2"><b>−</b>Konstrukční půdorysy (Structural Plan)</li>
      <li class="l3 leaf"><b></b><svg class="ic"><use href="#view"/></svg>Level 01 (All) - Foundation</li>
      <li class="l2"><b>−</b>Půdorysy (Architectural Plan)</li>
      <li class="l3 leaf"><b></b><svg class="ic"><use href="#view"/></svg>Level 01 (El Cabrillo)</li>
      <li class="l3 leaf cur"><b></b><svg class="ic"><use href="#view"/></svg>Level 01 (The Charmant)</li>
      <li class="l3 leaf"><b></b><svg class="ic"><use href="#view"/></svg>Level 01 (The Dover)</li>
      <li class="l3 leaf"><b></b><svg class="ic"><use href="#view"/></svg>Presentation_Level 01 (El Cabrillo)</li>
      <li class="l3 leaf"><b></b><svg class="ic"><use href="#view"/></svg>Presentation_Level 01 (The Charmant)</li>
      <li class="l3 leaf"><b></b><svg class="ic"><use href="#view"/></svg>Presentation_Level 01 (The Dover)</li>
      <li class="l2"><b>−</b>Půdorysy (Roof Plan)</li>
      <li class="l3 leaf"><b></b><svg class="ic"><use href="#view"/></svg>Roof (El Cabrillo)</li>
      <li class="l3 leaf"><b></b><svg class="ic"><use href="#view"/></svg>Roof (The Charmant)</li>
      <li class="l3 leaf"><b></b><svg class="ic"><use href="#view"/></svg>Roof (The Dover)</li>
      <li class="l2"><b>+</b>Půdorysy (Site Plan)</li>
      <li class="l2"><b>+</b>Půdorysy (Working Plan)</li>
      <li class="l2"><b>+</b>Půdorysy stropů (Architectural Ceiling Plan)</li>
      <li class="l2"><b>+</b>3D pohledy (3D View)</li>
      <li class="l2"><b>+</b>Pohledy (Building Elevation)</li>
      <li class="l2"><b>+</b>Pohledy (Interior Elevation)</li>
      <li class="l2"><b>+</b>Řezy (Building Section)</li>
      <li class="l2"><b>+</b>Řezy (Working Section)</li>
      <li class="l2"><b>+</b>Pohledy schémat/kreseb (Detail)</li>
      <li class="l1"><b>+</b>Koordinace</li>
      <li class="l1"><b>+</b>Mechanické</li>
      <li><b>+</b><svg class="ic"><use href="#legend"/></svg>Legendy</li>
      <li><b>+</b><svg class="ic"><use href="#table"/></svg>Výkazy/Množství (By Type)</li>
      <li><b>−</b><svg class="ic"><use href="#sheets"/></svg>Výkresy (Sheet Group)</li>
      <li class="l1"><b>−</b><svg class="ic"><use href="#stack"/></svg>El Cabrillo</li>
      <li class="l2"><b>−</b>Architectural</li>
      <li class="l3"><b>+</b>A2.1a - El Cabrillo - Floor Plan - Level 01</li>
      <li class="l3"><b>+</b>A2.2a - El Cabrillo - Roof Plan</li>
    </ul>
  </aside>
</main>
</body>
</html>
```
FILE: styles.css
```
* { box-sizing: border-box; margin: 0; padding: 0; }
html, body { height: 100%; }
body {
  display: flex; flex-direction: column; overflow: hidden;
  font: 8px/11px Roboto, "Open Sans", sans-serif; color: #3c3c3c; background: #d6d6d6;
}
button, input, select { font: inherit; color: inherit; }
button { border: 0; background: none; display: flex; align-items: center; justify-content: center; white-space: nowrap; }
svg { flex: none; display: block; }
h2, h3 { font-size: 8px; font-weight: 400; }
.sprite { position: absolute; width: 0; height: 0; }
.dd { width: 6px; height: 4px; }
.ic { width: 12px; height: 12px; }
.off { opacity: .8; color: #c2c2c2; }
.on { background: #d3e8f5; box-shadow: inset 0 0 0 1px #a5d0ea; }
.sep { width: 1px; height: 12px; background: #bbb; }

/* title bar */
.titlebar { display: flex; align-items: center; height: 17px; flex: none; background: #d6d6d6; }
.quick {
  display: grid; flex: none; align-items: center; justify-items: center; height: 16px;
  grid-template-columns: 18px 15px 20px 15px 18px 7px 16px 8px 16px 8px 16px 17px 7px 14px 5px 15px 10px 14px 16px 16px 22px 6px 16px 18px 6px 14px 17px 7px 12px;
}
.quick .on { width: 17px; height: 16px; }
.doc-title { margin-left: 9px; flex: none; color: #555; }
.account { display: flex; align-items: center; gap: 4px; margin-left: 14px; }
.help { width: 11px; height: 11px; border: 1px solid #2d6fb5; border-radius: 50%; color: #2d6fb5; font-weight: 700; }
.winbtns { display: flex; gap: 9px; margin-left: auto; padding-right: 9px; }

/* menu tabs */
.menu { display: flex; align-items: center; gap: 1px; height: 15px; flex: none; padding-left: 2px; color: #555; }
.menu button { padding: 0 6px; height: 14px; color: #555; }
.menu .file { width: 37px; background: #1c74bb; color: #fff; }
.menu .ctx { width: 110px; background: #86ad3b; color: #33421a; }
.menu .mode { margin-left: 6px; gap: 6px; }

/* ribbon */
.ribbon { display: flex; height: 66px; flex: none; background: #ebeee4; box-shadow: inset 0 1px #9dbd5c; }
.panel { display: flex; flex-direction: column; background: #f8f8f8; border-right: 1px solid #e8e8e8; flex: none; padding-top: 1px; }
.panel h2 { height: 13px; line-height: 13px; display: flex; align-items: center; justify-content: center; gap: 3px; }
.panel h2 .dd { width: 7px; }
.tools { flex: 1; display: flex; align-items: center; justify-content: center; }
.ctx-panel { border-top: 1px solid #9dbd5c; padding-top: 0; }
.ctx-panel h2 { background: #e8ecde; }
.big { flex-direction: column; gap: 3px; line-height: 11px; }
.p-select { width: 41px; }
.p-select .big { width: 30px; height: 48px; margin-left: 1px; }
.p-props { width: 41px; }
.two { flex-direction: column; gap: 1px; }
.p-props button { width: 26px; height: 24px; }
.p-clip { width: 57px; }
.p-clip .tools { gap: 9px; padding-left: 3px; }
.col3 { display: grid; grid-template-rows: repeat(3, 17px); }
.col3 button { gap: 3px; justify-content: flex-start; }
.p-geom { width: 115px; }
.labelled { width: 67px; }
.grid23 { display: grid; grid-template-columns: 17px 17px; grid-template-rows: repeat(3, 17px); }
.p-ctrl { width: 59px; }
.p-ctrl .big { height: 46px; gap: 5px; justify-content: flex-start; }
.p-modify { width: 162px; }
.grid42 { display: grid; grid-template-columns: repeat(4, 26px); grid-template-rows: 24px 25px; }
.grid33 { display: grid; grid-template-columns: repeat(3, 17px); grid-template-rows: repeat(3, 17px); }
.p-view { width: 43px; }
.p-view .tools { gap: 3px; }
.col2 { display: grid; grid-template-rows: 17px 17px; align-self: flex-start; }
.p-measure { width: 38px; }
.p-measure .two { gap: 7px; }
.p-measure button { gap: 3px; }
.p-create { width: 57px; border-right: 0; }
.grid22 { display: grid; grid-template-columns: 26px 26px; grid-template-rows: 25px 25px; }
.p-leader { width: 117px; }
.p-leader .tools { gap: 2px; }
.attach .on { margin: 1px 0; }
.p-text { width: 166px; border-right: 0; }
.p-text .tools { justify-content: flex-start; padding-left: 1px; }
.grid32 { display: grid; grid-template-columns: repeat(3, 26px); grid-template-rows: 22px 22px; gap: 2px 0; }
.spell { width: 48px; margin-left: 2px; gap: 0; }
.spell b { font-size: 9px; line-height: 10px; color: #666; }
.spell svg { margin-bottom: 4px; }
.find { width: 37px; gap: 2px; }

/* docked panels */
.work { flex: 1; min-height: 0; display: grid; grid-template-columns: 188px minmax(0, 1fr) 170px; border-top: 1px solid #c8c8c8; }
.cap { display: flex; align-items: center; justify-content: space-between; height: 13px; padding: 0 2px; background: #d2d2d2; white-space: nowrap; color: #555; flex: none; }
.props { display: flex; flex-direction: column; background: #fff; border-right: 3px solid #d0d0d0; min-height: 0; }
.type { height: 46px; padding: 1px 5px 0 4px; background: #f5f5f5; justify-content: flex-start; text-align: left; flex: none; }
.type span { flex: 1; padding-left: 3px; }
.swatch { width: 44px; height: 45px; border: 1px solid #ddd; background: #fafafa; }
.filter { display: flex; align-items: center; gap: 3px; height: 18px; padding-left: 2px; background: #f5f5f5; flex: none; }
.pick { display: flex; align-items: center; width: 125px; height: 16px; border-bottom: 1px solid #ccc; padding-left: 2px; }
.pick select { flex: 1; appearance: none; border: 0; background: transparent; height: 14px; }
.filter button { gap: 2px; }
.marked { border: 3px solid #e8151b; margin-right: -3px; height: 97px; flex: none; background: #fff; position: relative; }
.marked h3 { display: flex; justify-content: space-between; align-items: center; height: 11px; line-height: 11px; background: #e4e4e4; font-weight: 700; padding-right: 5px; }
.marked table { width: calc(100% - 9px); border-collapse: collapse; table-layout: fixed; }
.marked tr { height: 13px; }
.marked th { width: 86px; font-weight: 400; text-align: left; padding-left: 4px; white-space: nowrap; border-right: 1px solid #eee; }
.marked td { padding-left: 2px; border-bottom: 1px solid #f1f1f1; }
.marked .cell-edit { outline: 1px solid #777; outline-offset: -1px; }
.marked input { appearance: none; width: 8px; height: 8px; border: 1px solid #999; display: block; margin-left: 1px; }
.marked input:checked { background: #666; border-color: #666; color: #fff; }
.marked input:checked::after { content: "✓"; display: block; font: 700 7px/6px "DejaVu Sans", sans-serif; }
.props footer { margin-top: auto; display: flex; align-items: center; gap: 3px; height: 15px; padding: 0 3px; background: #ececec; flex: none; }
.props footer button { width: 13px; height: 14px; }
.props footer .on { background: #8cc5ea; }
.props footer span { font-size: 6px; line-height: 5px; color: #555; }
.props footer em { font-style: normal; color: #2f7fc4; }
.props footer .apply { width: 45px; height: 12px; margin-left: auto; border: 1px solid #d5d5d5; border-radius: 2px; color: #aaa; background: #efefef; }

.center { display: grid; grid-template-columns: minmax(0, 1fr) 14px; grid-template-rows: 15px minmax(0, 1fr) 11px; min-height: 0; background: #fff; }
.tabs { grid-column: 1 / -1; display: grid; grid-template-columns: 166fr 109fr 116fr 131fr 130fr 14px; background: #cbcbcb; }
.tabs button { justify-content: flex-start; gap: 4px; padding-left: 3px; color: #5c5c5c; }
.tabs .active { background: #fff; font-weight: 700; color: #333; }
.tabs .x { margin-left: auto; margin-right: 4px; }
.canvas { position: relative; overflow: hidden; background: #fff; }
.drawing { position: absolute; inset: 0; width: 100%; height: 100%; }
.ink { stroke: #6f6f6f; }
.ink .hatch { fill: #c0c0c0; }
.ink .thin { stroke: #8c8c8c; }
.faint { stroke: #c6c6c6; }
.tag { font: 34px Lato, sans-serif; fill: #000; }
.gfi { font: 23px "Liberation Sans", sans-serif; fill: #000; }
.note { stroke: #5b84c8; }
.note text { font: 35px Lato, sans-serif; fill: #0a3fc0; stroke: none; }
.note .solid { fill: #0a3fc0; stroke: none; }
.note .grip { fill: #6ea3e0; }
.note .rot { stroke: #0f55c8; }
.accel { position: absolute; right: 27px; top: 16px; display: flex; align-items: center; gap: 3px; color: #999; line-height: 12px; }
.accel input { appearance: none; width: 23px; height: 12px; border-radius: 6px; background: radial-gradient(circle at 6px 6px, #fff 4px, #999 5px); }
.navbar { position: absolute; right: 1px; top: 1px; border: 1px solid #c4c4c4; border-radius: 3px; background: #f6f6f6; }
.vscroll { display: flex; flex-direction: column; align-items: center; justify-content: space-between; padding: 3px 2px; background: #e8e8e8; border-right: 2px solid #f6f6f6; }
.thumb { background: #8a8a8a; border-radius: 3px; }
.vscroll .thumb { width: 5px; height: 12px; }
.viewbar { grid-column: 1 / -1; display: flex; align-items: center; gap: 4px; padding-left: 7px; background: #f2f2f2; overflow: hidden; }
.scale { width: 42px; white-space: nowrap; }
.hscroll { flex: 1; display: flex; align-items: center; justify-content: space-between; background: #e8e8e8; height: 11px; padding: 0 2px; margin-left: 2px; }
.hscroll .thumb { width: 12px; height: 6px; }

.browser { display: flex; flex-direction: column; background: #fff; border-left: 2px solid #d0d0d0; overflow: hidden; min-height: 0; }
.strip { display: flex; height: 15px; background: #bdbdbd; flex: none; }
.strip button { width: 16px; }
.strip .active { background: #f6f6f6; }
.search { display: flex; align-items: center; gap: 5px; height: 18px; margin: 5px 0 5px 6px; padding-left: 5px; border: 1px solid #e2e2e2; border-right: 0; flex: none; }
.search input { flex: 1; min-width: 0; border: 0; outline: 0; background: none; }
.search input::placeholder { color: #a8a8a8; }
.tree { list-style: none; display: grid; grid-auto-rows: 13px 14px; }
.tree li { display: flex; align-items: center; white-space: nowrap; }
.tree b { width: 15px; padding-right: 3px; text-align: center; font-size: 10px; color: #666; flex: none; }
.tree .ic { margin-right: 1px; }
.tree .l1, .tree .l2, .tree .l3 {
  background-repeat: repeat-y;
  background-image: linear-gradient(#ccc 50%, transparent 50%), linear-gradient(#ccc 50%, transparent 50%), linear-gradient(#ccc 50%, transparent 50%);
}
.tree .l1 { padding-left: 11px; background-size: 1px 2px, 0 0, 0 0; background-position: 6px 0; }
.tree .l2 { padding-left: 22px; background-size: 1px 2px, 1px 2px, 0 0; background-position: 6px 0, 17px 0; }
.tree .l3 { padding-left: 33px; background-size: 1px 2px; background-position: 6px 0, 17px 0, 28px 0; }
.tree .leaf b { height: 1px; margin-right: 3px; width: 12px; padding: 0; border-top: 1px dotted #bbb; }
.tree .cur { font-weight: 700; background-color: #f0f0f0; color: #222; }
```
